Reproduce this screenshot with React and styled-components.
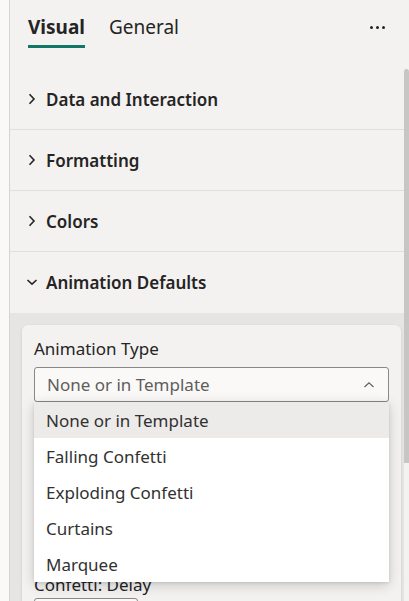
import React from "react";
import styled, { createGlobalStyle } from "styled-components";

const GlobalStyle = createGlobalStyle`
  html, body {
    margin: 0;
    padding: 0;
    background: #faf9f8;
    font-family: "Noto Sans", "Open Sans", sans-serif;
    color: #252423;
  }
`;

const sections = ["Data and Interaction", "Formatting", "Colors"];
const options = [
  "None or in Template",
  "Falling Confetti",
  "Exploding Confetti",
  "Curtains",
  "Marquee",
];

function Chevron({ open }) {
  return (
    <ChevronIcon viewBox="0 0 12 12" width="12" height="12">
      {open ? (
        <path d="M1.5 4 L6 8.2 L10.5 4" />
      ) : (
        <path d="M3.5 1.2 L8 6 L3.5 10.8" />
      )}
    </ChevronIcon>
  );
}

function App() {
  return (
    <Page>
      <GlobalStyle />
      <Gutter />
      <Panel>
        <Header>
          <Tabs>
            <Tab active>Visual</Tab>
            <Tab>General</Tab>
          </Tabs>
          <More>
            <span />
            <span />
            <span />
          </More>
        </Header>

        {sections.map((title) => (
          <SectionRow key={title}>
            <Chevron />
            {title}
          </SectionRow>
        ))}
        <SectionRow open>
          <Chevron open />
          Animation Defaults
        </SectionRow>

        <SectionBody>
          <Card>
            <Field>
              <Label>Animation Type</Label>
              <DropdownWrap>
                <Dropdown>
                  None or in Template
                  <svg width="12" height="8" viewBox="0 0 12 8">
                    <path d="M1.5 6 L6 1.8 L10.5 6" fill="none" stroke="#605e5c" strokeWidth="1.1" />
                  </svg>
                </Dropdown>
                <Listbox>
                  {options.map((opt, i) => (
                    <Option key={opt} selected={i === 0}>
                      {opt}
                    </Option>
                  ))}
                </Listbox>
              </DropdownWrap>
            </Field>
            {/* fields hidden under the open list */}
            <Covered />
            <Field tight>
              <Label>Confetti: Delay</Label>
              <Input />
            </Field>
          </Card>
        </SectionBody>

        <ScrollThumb />
      </Panel>
    </Page>
  );
}

const Page = styled.div`
  display: flex;
  width: 409px;
  height: 601px;
  overflow: hidden;
`;

const Gutter = styled.div`
  width: 9px;
  flex: none;
  background: #faf9f8;
  border-right: 1px solid #d6d4d2;
`;

const Panel = styled.div`
  position: relative;
  flex: 1;
  display: flex;
  flex-direction: column;
  background: #f3f2f1;
  padding-right: 5px;
  overflow: hidden;
`;

const Header = styled.div`
  height: 69px;
  flex: none;
  display: flex;
  justify-content: space-between;
  align-items: flex-start;
  padding: 0 19px 0 18px;
`;

const Tabs = styled.div`
  display: flex;
  gap: 24px;
  padding-top: 13px;
`;

const Tab = styled.div`
  font-size: 19px;
  line-height: 28px;
  font-weight: ${(p) => (p.active ? 700 : 400)};
  color: #252423;
  padding-bottom: 4px;
  border-bottom: 3px solid ${(p) => (p.active ? "#117865" : "transparent")};
`;

const More = styled.div`
  display: flex;
  gap: 3px;
  margin-top: 26px;

  span {
    width: 3px;
    height: 3px;
    border-radius: 50%;
    background: #252423;
  }
`;

const SectionRow = styled.div`
  height: 60px;
  flex: none;
  display: flex;
  align-items: center;
  gap: 8px;
  padding-left: 16px;
  font-size: 17px;
  font-weight: 600;
  color: #252423;
  border-bottom: 1px solid ${(p) => (p.open ? "transparent" : "#e1dfdd")};
`;

const ChevronIcon = styled.svg`
  fill: none;
  stroke: #252423;
  stroke-width: 1.6;
`;

const SectionBody = styled.div`
  flex: 1;
  background: #e6e5e4;
  padding: 12px 3px 0 12px;
`;

const Card = styled.div`
  background: #f3f2f1;
  border-radius: 6px;
  box-shadow: 0 1px 3px rgba(0, 0, 0, 0.12);
  padding: 13px 12px 20px;
  display: flex;
  flex-direction: column;
`;

const Field = styled.div`
  display: flex;
  flex-direction: column;
  gap: ${(p) => (p.tight ? "2px" : "7px")};
`;

const Covered = styled.div`
  height: 172px;
`;

const Label = styled.div`
  font-size: 17px;
  line-height: 22px;
  color: #252423;
`;

const DropdownWrap = styled.div`
  position: relative;
`;

const Dropdown = styled.div`
  height: 35px;
  box-sizing: border-box;
  border: 1px solid #8a8886;
  border-radius: 3px;
  background: #faf9f8;
  display: flex;
  align-items: center;
  justify-content: space-between;
  padding: 0 13px 0 12px;
  font-size: 17px;
  color: #605e5c;
`;

const Listbox = styled.div`
  position: absolute;
  top: 35px;
  left: 0;
  right: 0;
  background: #ffffff;
  box-shadow: 0 3px 12px rgba(0, 0, 0, 0.18), 0 1px 3px rgba(0, 0, 0, 0.1);
  z-index: 2;
`;

const Option = styled.div`
  height: 36px;
  display: flex;
  align-items: center;
  padding-left: 12px;
  font-size: 17px;
  color: #323130;
  background: ${(p) => (p.selected ? "#edebe9" : "#ffffff")};
`;

const Input = styled.div`
  width: 104px;
  height: 32px;
  box-sizing: border-box;
  border: 1px solid #8a8886;
  border-radius: 3px;
  background: #faf9f8;
`;

const ScrollThumb = styled.div`
  position: absolute;
  top: 69px;
  right: 0;
  width: 5px;
  height: 394px;
  background: #c8c6c4;
  border-radius: 3px 3px 0 0;
`;

export default App;
